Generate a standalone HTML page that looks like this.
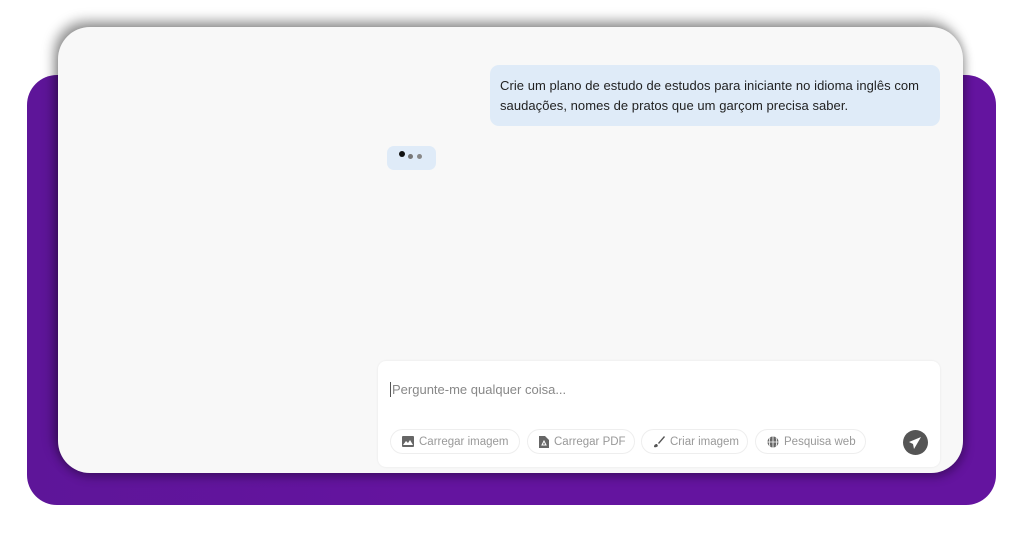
<!DOCTYPE html>
<html><head><meta charset="utf-8"><style>
*{margin:0;padding:0;box-sizing:border-box}
body{width:1024px;height:536px;background:#fff;position:relative;overflow:hidden;font-family:"Liberation Sans",sans-serif}
.purple{position:absolute;left:27px;top:75px;width:969px;height:430px;border-radius:30px;background:linear-gradient(90deg,#5e1599 0%,#64149f 40%,#64149f 100%)}
.card{position:absolute;left:58px;top:27px;width:905px;height:446px;border-radius:32px;background:#f8f8f8;box-shadow:-4px -6px 12px rgba(0,0,0,.4),2px 4px 10px rgba(0,0,0,.3)}
.bubble{position:absolute;left:490px;top:65px;width:450px;height:61px;background:#dfebf8;border-radius:9px;padding:11px 10px 0 10px;font-size:13px;line-height:20px;color:#222;letter-spacing:0.05px}
.dots{position:absolute;left:387px;top:146px;width:49px;height:24px;background:#dfebf8;border-radius:7px}
.dots i{position:absolute;border-radius:50%}
.input{position:absolute;left:378px;top:361px;width:562px;height:106px;background:#fff;border-radius:8px;box-shadow:0 0 2px rgba(0,0,0,.08)}
.ph{position:absolute;left:12px;top:21px;font-size:13px;color:#888;border-left:1px solid #555;padding-left:1px;line-height:15px}
.chip{position:absolute;top:68px;height:25px;border:1px solid #eee;border-radius:13px;font-size:11.5px;color:#999;display:flex;align-items:center;padding-left:11px;gap:5px}
.chip svg{flex:none}
.send{position:absolute;left:525px;top:69px;width:25px;height:25px;border-radius:50%;background:#555}
</style></head><body>
<div class="purple"></div>
<div class="card"></div>
<div class="bubble">Crie um plano de estudo de estudos para iniciante no idioma inglês com saudações, nomes de pratos que um garçom precisa saber.</div>
<div class="dots"><i style="left:12px;top:5px;width:6px;height:6px;background:#111"></i><i style="left:21px;top:8px;width:5px;height:5px;background:#777"></i><i style="left:30px;top:8px;width:5px;height:5px;background:#888"></i></div>
<div class="input">
<div class="ph">Pergunte-me qualquer coisa...</div>
<div class="chip" style="left:12px;width:130px"><svg width="12" height="11" viewBox="0 0 12 11"><rect width="12" height="11" rx="1" fill="#666"/><path d="M1 9l3-4 2 2 2-3 3 5z" fill="#fff"/></svg>Carregar imagem</div>
<div class="chip" style="left:149px;width:108px"><svg width="10" height="12" viewBox="0 0 10 12"><path d="M0 0h6l4 4v8H0z" fill="#666"/><path d="M3 9l2-4 2 4z" fill="none" stroke="#fff"/></svg>Carregar PDF</div>
<div class="chip" style="left:263px;width:107px"><svg width="12" height="12" viewBox="0 0 12 12"><path d="M11 0L5 7l1 1 6-7zM4 8c-2 0-3 1-3 3 0 0 2 1 4-1z" fill="#555"/></svg>Criar imagem</div>
<div class="chip" style="left:377px;width:111px"><svg width="12" height="12" viewBox="0 0 12 12"><circle cx="6" cy="6" r="5.5" fill="#666"/><path d="M0.5 6h11M6 .5v11M3 1.5c-1 3-1 6 0 9M9 1.5c1 3 1 6 0 9" stroke="#fff" stroke-width=".8" fill="none"/></svg>Pesquisa web</div>
<div class="send"><svg width="25" height="25" viewBox="0 0 25 25"><path d="M18 7L6 12l4 2 1 5z" fill="#fff"/></svg></div>
</div>
</body></html>
